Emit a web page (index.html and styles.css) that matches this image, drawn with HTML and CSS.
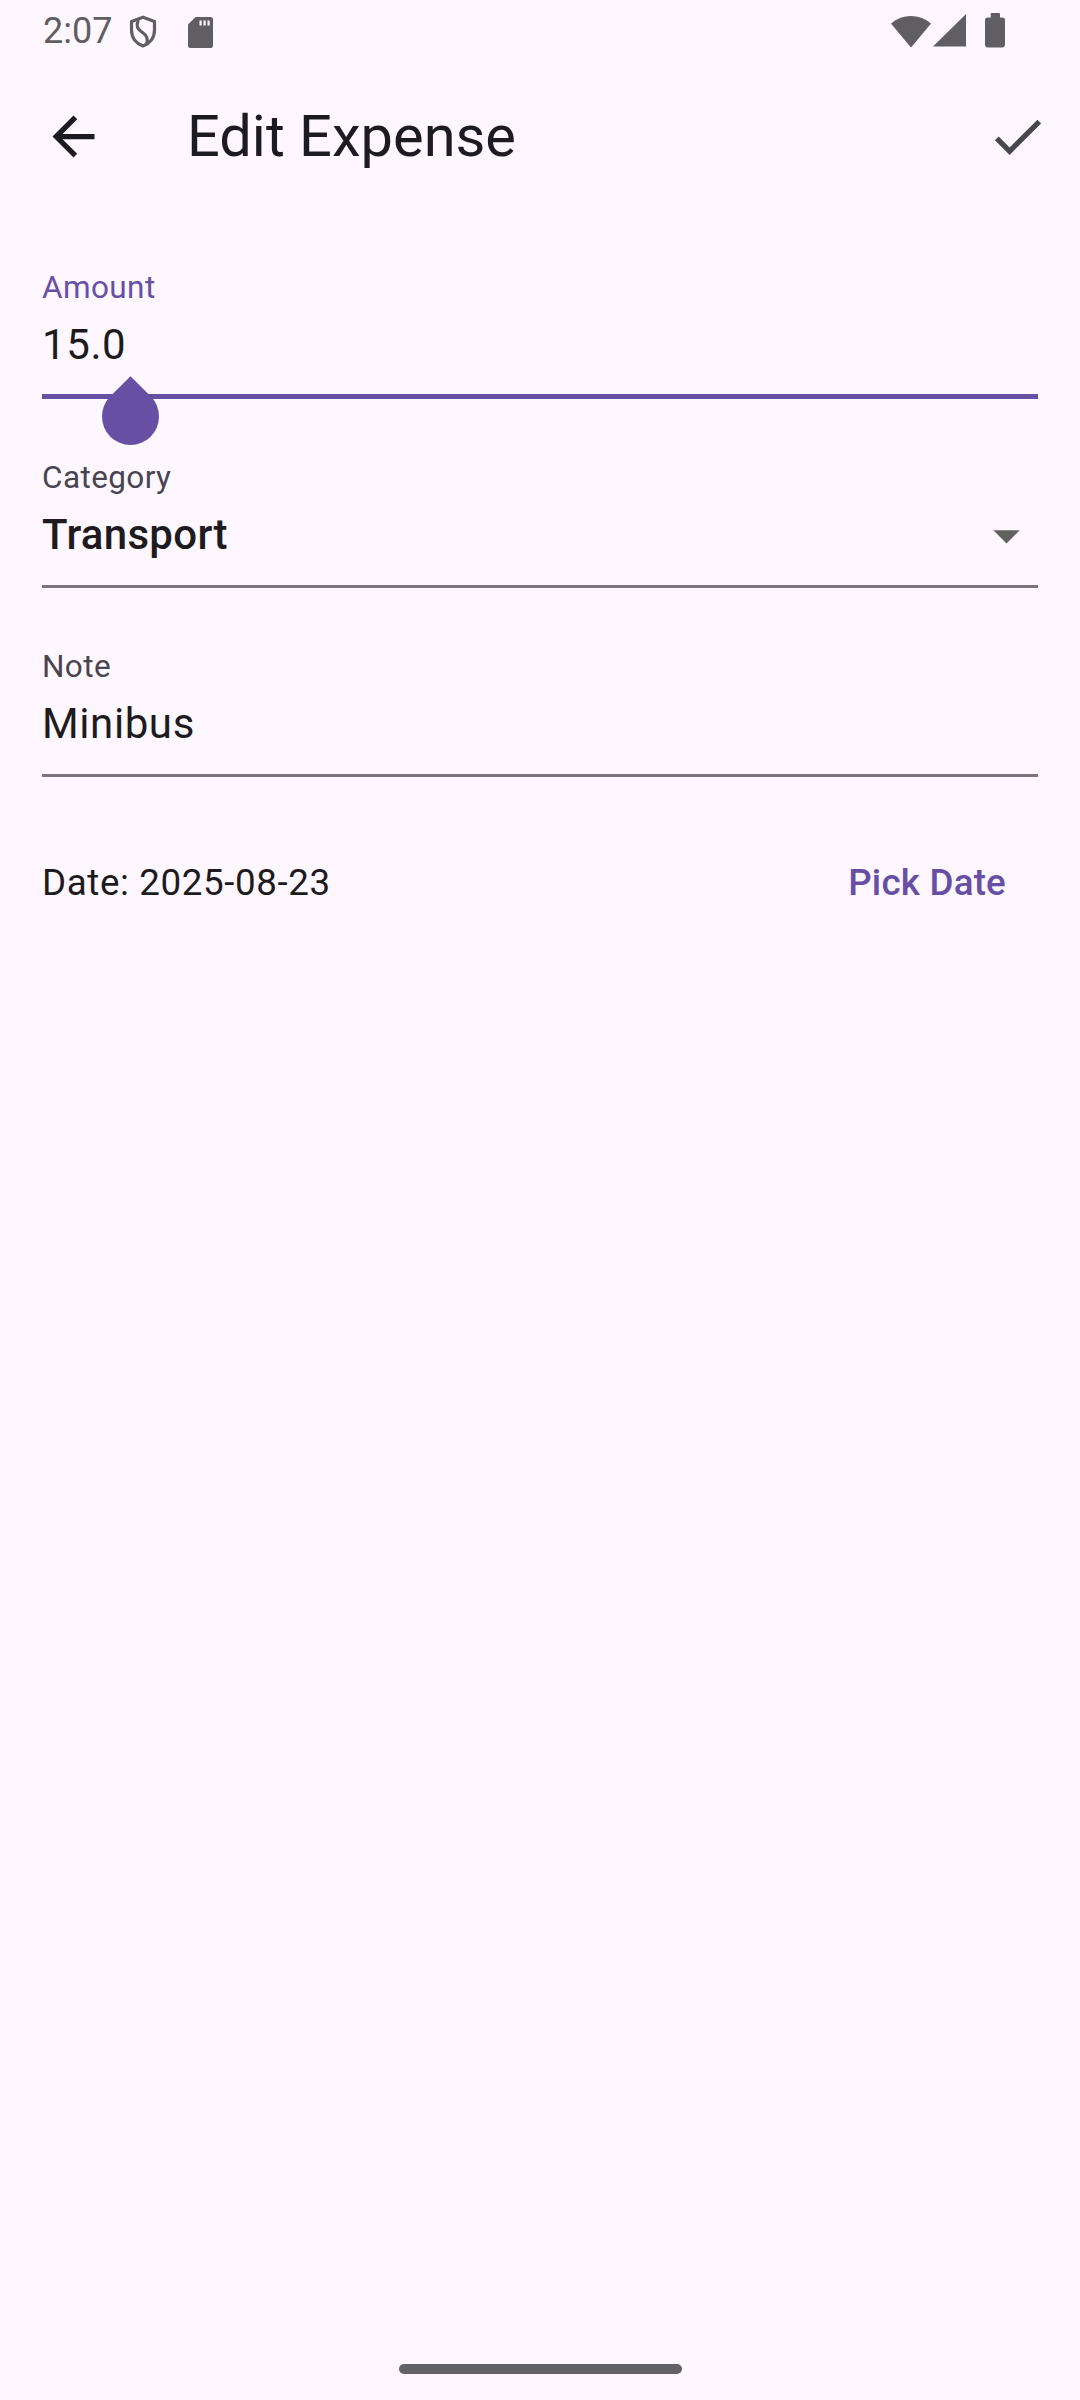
FILE: index.html
```html
<!DOCTYPE html>
<html lang="en">
<head>
<meta charset="utf-8">
<title>Edit Expense</title>
<link rel="stylesheet" href="styles.css">
</head>
<body>
<div class="screen">
  <div class="status">
    <span class="time">2:07</span>
    <svg class="ic-shield" width="28" height="33" viewBox="0 0 28 33">
      <path d="M14 2.2 L25.5 6.4 V15 C25.5 22.8 20.8 28.6 14 31 C7.2 28.6 2.5 22.8 2.5 15 V6.4 Z" fill="none" stroke="#615E63" stroke-width="3.2" stroke-linejoin="round"/>
      <path d="M9 6.5 C6.5 11.5 9 14.5 13.5 17.5 C18 20.5 19.5 24 17.5 29" fill="none" stroke="#615E63" stroke-width="3.2" stroke-linecap="round"/>
    </svg>
    <svg class="ic-sd" width="25" height="31" viewBox="0 0 25 31">
      <path d="M7.5 0 H22.5 A2.5 2.5 0 0 1 25 2.5 V28.5 A2.5 2.5 0 0 1 22.5 31 H2.5 A2.5 2.5 0 0 1 0 28.5 V7.5 Z" fill="#615E63"/>
      <rect x="11.5" y="3.5" width="2.2" height="5" fill="#FEF7FF"/>
      <rect x="15.5" y="3.5" width="2.2" height="5" fill="#FEF7FF"/>
      <rect x="19.5" y="3.5" width="2.2" height="5" fill="#FEF7FF"/>
    </svg>
    <span class="status-gap"></span>
    <svg class="ic-wifi" width="40" height="33" viewBox="0 0 40 33">
      <path d="M20 32.5 L0.8 9.6 A30 30 0 0 1 39.2 9.6 Z" fill="#615E63" stroke="#615E63" stroke-width="1.2" stroke-linejoin="round"/>
    </svg>
    <svg class="ic-signal" width="33" height="33" viewBox="0 0 33 33">
      <path d="M33 0 V32.5 H0 Z" fill="#615E63"/>
    </svg>
    <svg class="ic-battery" width="20" height="35" viewBox="0 0 20 35">
      <rect x="5.7" y="0" width="9.3" height="6" rx="1" fill="#615E63"/>
      <rect x="0" y="4.4" width="20" height="30" rx="2.8" fill="#615E63"/>
    </svg>
  </div>

  <div class="appbar">
    <svg class="ic-back" width="63" height="63" viewBox="0 0 24 24">
      <path d="M20 11H7.83l5.59-5.59L12 4l-8 8 8 8 1.41-1.41L7.83 13H20v-2z" fill="#1D1B20"/>
    </svg>
    <h1 class="title">Edit Expense</h1>
    <svg class="ic-check" width="63" height="63" viewBox="0 0 24 24">
      <path d="M9 16.17L4.83 12l-1.42 1.41L9 19 21 7l-1.41-1.41z" fill="#49454F"/>
    </svg>
  </div>

  <div class="form">
    <div class="field field-focused">
      <div class="label label-focused">Amount</div>
      <div class="value">15.0</div>
      <div class="handle"></div>
    </div>

    <div class="field">
      <div class="label">Category</div>
      <div class="value-row">
        <span class="value value-strong">Transport</span>
        <svg class="ic-drop" width="63" height="63" viewBox="0 0 24 24">
          <path d="M7 10l5 5 5-5z" fill="#616161"/>
        </svg>
      </div>
    </div>

    <div class="field">
      <div class="label">Note</div>
      <div class="value">Minibus</div>
    </div>

    <div class="date-row">
      <span class="date-text">Date: 2025-08-23</span>
      <span class="pick-btn">Pick Date</span>
    </div>
  </div>

  <div class="spacer"></div>
  <div class="navbar"><span class="nav-pill"></span></div>
</div>
</body>
</html>
```

FILE: styles.css
```css
* { box-sizing: border-box; }

html, body {
  margin: 0;
  padding: 0;
  background: #FEF7FF;
}

body {
  font-family: Roboto, "Noto Sans", "Liberation Sans", sans-serif;
  color: #1D1B20;
}

.screen {
  width: 1080px;
  height: 2400px;
  display: flex;
  flex-direction: column;
  background: #FEF7FF;
}

/* status bar */
.status {
  height: 63px;
  display: flex;
  align-items: flex-start;
  padding-left: 43px;
  flex-shrink: 0;
}

.time {
  font-size: 36px;
  line-height: 40px;
  margin-top: 11px;
  color: #615E63;
  letter-spacing: 0;
}

.ic-shield { margin-top: 15px; margin-left: 17px; }
.ic-sd { margin-top: 17px; margin-left: 31px; }
.status-gap { flex: 1; }
.ic-wifi { margin-top: 14px; }
.ic-signal { margin-top: 14px; margin-left: 2px; }
.ic-battery { margin-top: 13px; margin-left: 19px; margin-right: 75px; }

/* app bar */
.appbar {
  height: 147px;
  display: flex;
  align-items: center;
  padding-left: 42px;
  padding-right: 31px;
  flex-shrink: 0;
}

.title {
  margin: 0 0 0 82px;
  flex: 1;
  font-size: 57.75px;
  line-height: 72px;
  font-weight: 400;
  color: #1D1B20;
  position: relative;
  top: -1px;
}

/* form */
.form {
  padding: 0 42px;
  display: flex;
  flex-direction: column;
}

.field {
  position: relative;
  margin-top: 59px;
  padding-bottom: 22px;
  border-bottom: 3px solid #79747E;
}

.field-focused {
  margin-top: 58px;
  padding-bottom: 21px;
  border-bottom: 5px solid #6750A4;
}

.label {
  font-size: 31.5px;
  line-height: 40px;
  color: #49454F;
  letter-spacing: 0.4px;
}

.label-focused { color: #6750A4; }

.value {
  margin-top: 9px;
  font-size: 42px;
  line-height: 56px;
  color: #1D1B20;
  letter-spacing: 0.6px;
}

.value-row {
  margin-top: 9px;
  height: 56px;
  display: flex;
  align-items: center;
  justify-content: space-between;
}

.value-row .value { margin-top: 0; }

.value-strong {
  font-weight: 500;
  letter-spacing: 0.3px;
}

.ic-drop { flex-shrink: 0; }

.handle {
  position: absolute;
  left: 59.5px;
  top: 120px;
  width: 57px;
  height: 57px;
  background: #6750A4;
  border-radius: 0 50% 50% 50%;
  transform: rotate(45deg);
}

/* date row */
.date-row {
  margin-top: 82px;
  display: flex;
  align-items: baseline;
  justify-content: space-between;
  padding-right: 32px;
}

.date-text {
  font-size: 36.75px;
  line-height: 48px;
  color: #1D1B20;
  letter-spacing: 0.6px;
}

.pick-btn {
  font-size: 36.75px;
  line-height: 48px;
  font-weight: 500;
  color: #6750A4;
  letter-spacing: 0.2px;
}

.spacer { flex: 1; }

.navbar {
  height: 63px;
  display: flex;
  justify-content: center;
  padding-top: 27px;
  flex-shrink: 0;
}

.nav-pill {
  width: 283px;
  height: 10px;
  border-radius: 5px;
  background: #646166;
}
```
